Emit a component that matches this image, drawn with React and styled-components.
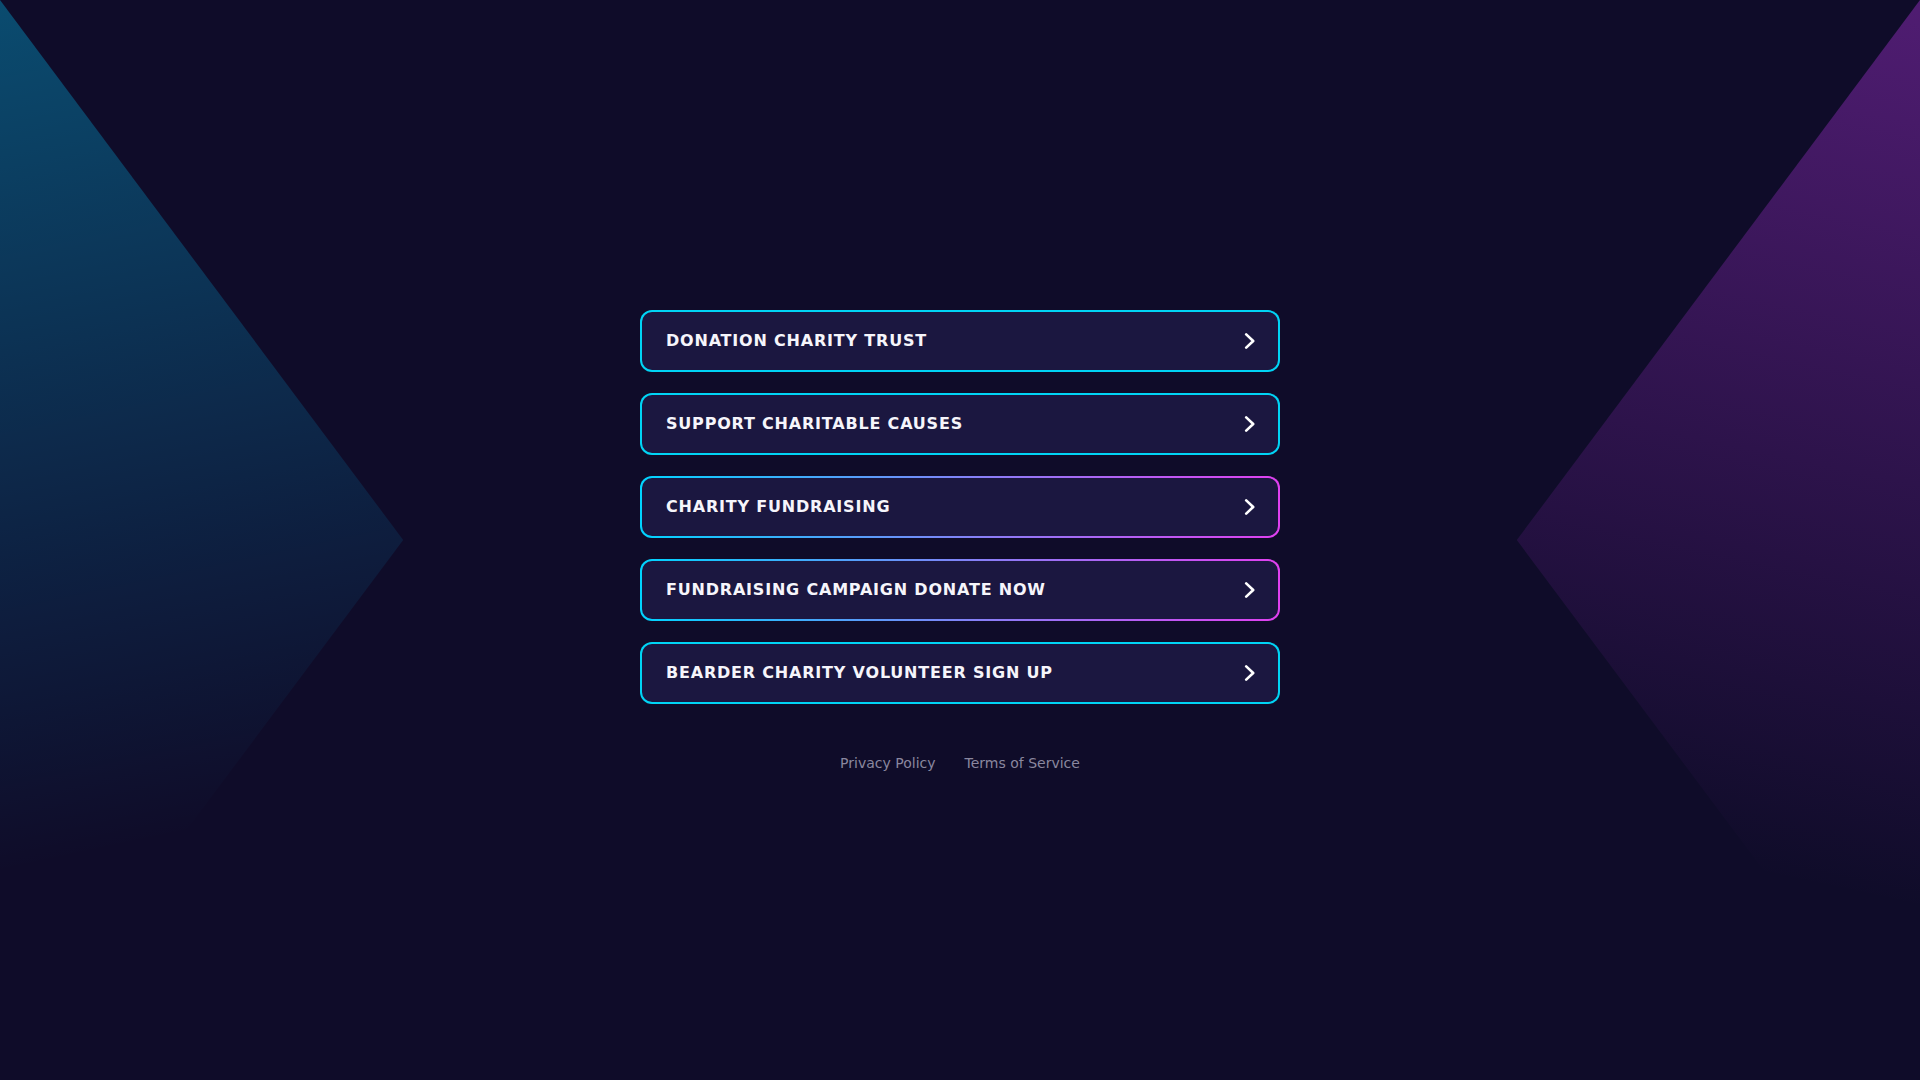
import React from "react";
import styled, { createGlobalStyle } from "styled-components";

const links = [
  { label: "DONATION CHARITY TRUST", glow: false },
  { label: "SUPPORT CHARITABLE CAUSES", glow: false },
  { label: "CHARITY FUNDRAISING", glow: true },
  { label: "FUNDRAISING CAMPAIGN DONATE NOW", glow: true },
  { label: "BEARDER CHARITY VOLUNTEER SIGN UP", glow: false },
];

const GlobalStyle = createGlobalStyle`
  * {
    box-sizing: border-box;
  }
  html,
  body {
    margin: 0;
    background-color: #0f0c29;
    font-family: "DejaVu Sans", "Noto Sans", sans-serif;
  }
`;

const Page = styled.div`
  position: relative;
  min-height: 100vh;
  overflow: hidden;
  display: flex;
  flex-direction: column;
  align-items: center;
  justify-content: center;
  background-color: #0f0c29;
`;

// decorative side wedges behind the content
const Wedge = styled.div`
  position: absolute;
  top: 0;
  bottom: 0;
  width: 21vw;
  pointer-events: none;
  ${({ side }) =>
    side === "left"
      ? `
    left: 0;
    clip-path: polygon(0 0, 100% 50%, 0 100%);
    background: linear-gradient(168deg, rgba(0, 205, 255, 0.33) 0%, rgba(0, 190, 255, 0.1) 52%, rgba(0, 190, 255, 0) 75%);
  `
      : `
    right: 0;
    clip-path: polygon(100% 0, 0 50%, 100% 100%);
    background: linear-gradient(192deg, rgba(205, 60, 255, 0.34) 0%, rgba(190, 50, 240, 0.12) 52%, rgba(190, 50, 240, 0) 78%);
  `}
`;

const List = styled.nav`
  position: relative;
  width: 640px;
  display: flex;
  flex-direction: column;
  gap: 21px;
`;

const LinkButton = styled.a`
  height: 62px;
  display: flex;
  align-items: center;
  justify-content: space-between;
  padding: 0 22px 0 24px;
  border: 2px solid transparent;
  border-radius: 12px;
  background: linear-gradient(#1b1740, #1b1740) padding-box,
    ${({ $glow }) =>
        $glow
          ? "linear-gradient(90deg, #00d4ff 0%, #8c7cf7 55%, #e040f0 100%)"
          : "linear-gradient(#00d4f5, #00d4f5)"}
      border-box;
  color: #f6f5fb;
  text-decoration: none;
  cursor: pointer;

  span {
    font-size: 16px;
    font-weight: 700;
    letter-spacing: 0.8px;
  }
`;

const Chevron = () => (
  <svg width="12" height="16" viewBox="0 0 12 16" fill="none">
    <polyline
      points="2.2 1.4 9.2 8 2.2 14.6"
      stroke="#ffffff"
      strokeWidth="2.6"
      strokeLinecap="round"
      strokeLinejoin="round"
    />
  </svg>
);

const Footer = styled.footer`
  position: relative;
  margin-top: 51px;
  display: flex;
  gap: 29px;

  a {
    font-size: 14px;
    color: #8a879f;
    text-decoration: none;
  }
`;

export default function App() {
  return (
    <>
      <GlobalStyle />
      <Page>
        <Wedge side="left" />
        <Wedge side="right" />
        <List>
          {links.map((item) => (
            <LinkButton key={item.label} $glow={item.glow}>
              <span>{item.label}</span>
              <Chevron />
            </LinkButton>
          ))}
        </List>
        <Footer>
          <a>Privacy Policy</a>
          <a>Terms of Service</a>
        </Footer>
      </Page>
    </>
  );
}
